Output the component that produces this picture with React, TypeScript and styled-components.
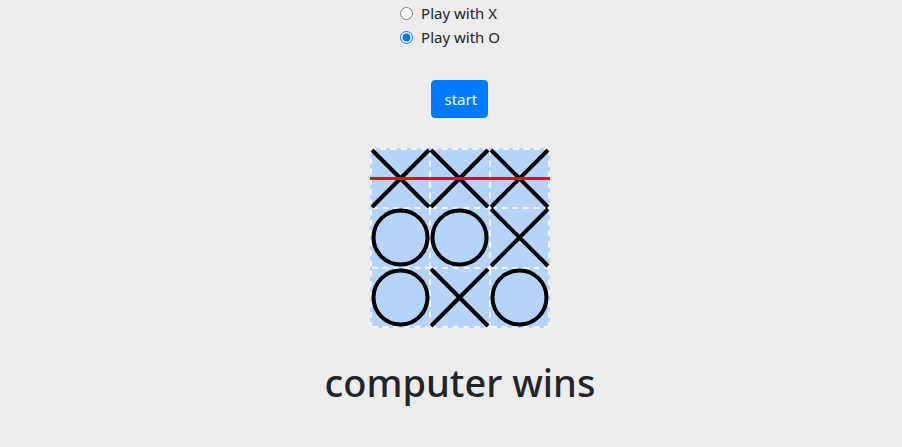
import React from "react";
import styled, { createGlobalStyle } from "styled-components";

const Global = createGlobalStyle`
  html, body { margin: 0; padding: 0; background: #ececec; }
  body { font-family: "Noto Sans", "Open Sans", sans-serif; color: #212529; font-size: 16px; line-height: 1.5; }
`;

const Page = styled.div`
  display: flex;
  flex-direction: column;
  align-items: center;
  padding-top: 1px;
`;

const Options = styled.div`
  display: flex;
  flex-direction: column;
  margin-left: -2px;
`;

const OptionRow = styled.label`
  display: flex;
  align-items: center;
  gap: 8px;
  height: 24px;
  font-size: 15px;
  color: #212529;
`;

const Radio = styled.input`
  width: 13px;
  height: 13px;
  margin: 0;
  accent-color: #0075ff;
`;

const Game = styled.section`
  display: flex;
  flex-direction: column;
  align-items: center;
  padding-left: 18px;
`;

const StartButton = styled.button`
  margin-top: 31px;
  background: #007bff;
  color: #fff;
  border: 1px solid #007bff;
  border-radius: 4px;
  padding: 6px 12px;
  font-family: inherit;
  font-size: 15px;
  line-height: 24px;
  height: 38px;
  width: 57px;
`;

const Board = styled.div`
  position: relative;
  box-sizing: border-box;
  margin-top: 30px;
  width: 180px;
  height: 180px;
  display: grid;
  grid-template-columns: repeat(3, 1fr);
  grid-template-rows: repeat(3, 1fr);
  background: #b6d4f9;
  border-top: 2px dashed #f3f8ff;
  border-left: 2px dashed #f3f8ff;
`;

const Cell = styled.div`
  position: relative;
  box-sizing: border-box;
  border-right: 2px dashed #f3f8ff;
  border-bottom: 2px dashed #f3f8ff;
`;

const PieceSvg = styled.svg`
  position: absolute;
  left: -2px;
  top: -2px;
  width: 61px;
  height: 61px;
`;

const WinLine = styled.div`
  position: absolute;
  left: -2px;
  right: 0;
  top: 27px;
  height: 3px;
  background: #ff0000;
`;

const Result = styled.h1`
  margin: 32px 0 0;
  font-size: 38px;
  font-weight: 500;
  line-height: 1.2;
  color: #212529;
`;

type Mark = "X" | "O";

const Piece = ({ mark }: { mark: Mark }) => (
  <PieceSvg viewBox="0 0 61 61">
    {mark === "X" ? (
      <g stroke="#000" strokeWidth="4">
        <line x1="2" y1="2" x2="59" y2="59" />
        <line x1="59" y1="2" x2="2" y2="59" />
      </g>
    ) : (
      <circle cx="30.5" cy="30.5" r="27" fill="none" stroke="#000" strokeWidth="4" />
    )}
  </PieceSvg>
);

const cells: Mark[] = ["X", "X", "X", "O", "O", "X", "O", "X", "O"];

export default function App() {
  return (
    <>
      <Global />
      <Page>
        <Options>
          <OptionRow>
            <Radio type="radio" name="mark" />
            Play with X
          </OptionRow>
          <OptionRow>
            <Radio type="radio" name="mark" defaultChecked />
            Play with O
          </OptionRow>
        </Options>
        <Game>
          <StartButton>start</StartButton>
          <Board>
            {cells.map((m, i) => (
              <Cell key={i}>
                <Piece mark={m} />
              </Cell>
            ))}
            <WinLine />
          </Board>
          <Result>computer wins</Result>
        </Game>
      </Page>
    </>
  );
}
